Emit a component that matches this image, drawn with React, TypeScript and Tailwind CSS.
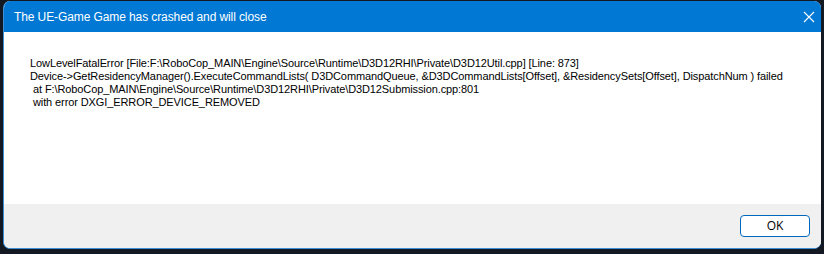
const lines = [
  "LowLevelFatalError [File:F:\\RoboCop_MAIN\\Engine\\Source\\Runtime\\D3D12RHI\\Private\\D3D12Util.cpp] [Line: 873]",
  "Device->GetResidencyManager().ExecuteCommandLists( D3DCommandQueue, &D3DCommandLists[Offset], &ResidencySets[Offset], DispatchNum ) failed",
  " at F:\\RoboCop_MAIN\\Engine\\Source\\Runtime\\D3D12RHI\\Private\\D3D12Submission.cpp:801",
  " with error DXGI_ERROR_DEVICE_REMOVED",
];

export default function App() {
  return (
    <div className="h-[254px] w-[824px] overflow-hidden bg-[#121923] pl-[3px] pt-[1px]">
      <div className="flex h-[248px] w-[818px] flex-col overflow-hidden rounded-[7px] border-b border-l border-[#3d8fd6] bg-white">
        {/* title bar */}
        <div className="flex h-[31px] shrink-0 items-center justify-between bg-[#0078d4] pl-[10px] pr-[6px]">
          <span className="font-['Liberation_Sans',Arial,sans-serif] text-[12px] tracking-[-0.1px] text-white">
            The UE-Game Game has crashed and will close
          </span>
          <svg width="12" height="12" viewBox="0 0 12 12">
            <path d="M1 1 L11 11 M11 1 L1 11" stroke="white" strokeWidth="1.1" />
          </svg>
        </div>

        {/* message */}
        <div className="flex-1 whitespace-pre pl-[26px] pt-[25px] font-['Liberation_Sans',Arial,sans-serif] text-[11px] leading-[13px] tracking-[-0.1px] text-black">
          {lines.map((l) => (
            <div key={l}>{l}</div>
          ))}
        </div>

        {/* footer */}
        <div className="flex h-[44px] shrink-0 items-center justify-end bg-[#f0f0f0] pr-[11px]">
          <button className="h-[22px] w-[70px] rounded-[4px] border border-[#0067c0] bg-white font-['Segoe_UI','Open_Sans',sans-serif] text-[12px] text-black">
            OK
          </button>
        </div>
      </div>
    </div>
  );
}
